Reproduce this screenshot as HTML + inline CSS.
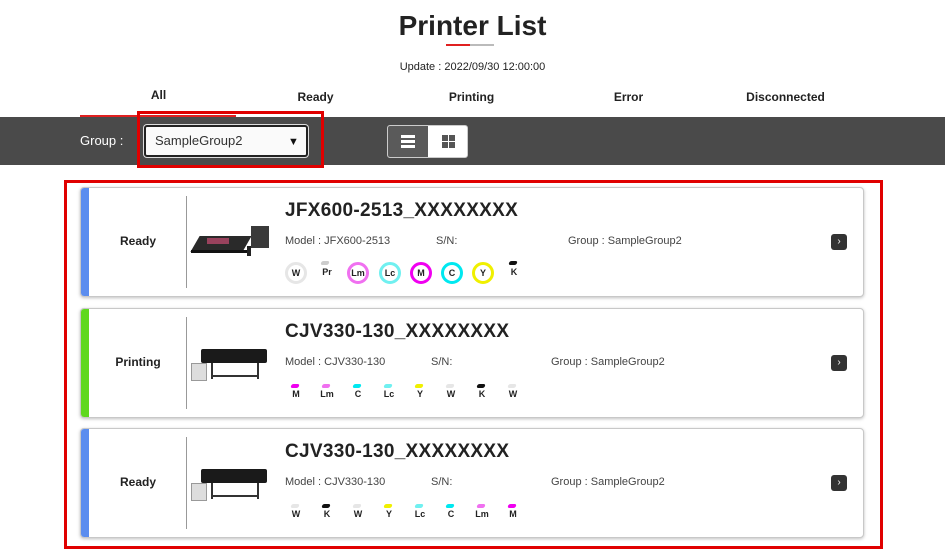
<!DOCTYPE html>
<html><head><meta charset="utf-8"><style>
*{margin:0;padding:0;box-sizing:border-box}
body{width:945px;height:550px;background:#fff;font-family:"Liberation Sans",sans-serif;color:#222;position:relative;overflow:hidden}
.a{position:absolute}
.tab{position:absolute;top:88px;width:157px;text-align:center;font-size:12px;font-weight:bold;color:#222}
.card{position:absolute;left:80px;width:784px;height:110px;border:1px solid #c8c8c8;border-radius:4px;background:#fff;box-shadow:0 1px 3px rgba(0,0,0,.25);overflow:hidden}
.bar{position:absolute;left:0;top:0;bottom:0;width:8px}
.st{position:absolute;left:8px;width:98px;top:0;line-height:106px;text-align:center;font-size:12px;font-weight:bold}
.dv{position:absolute;left:105px;top:8px;height:92px;width:1px;background:#999}
.nm{position:absolute;left:204px;top:12px;font-size:19px;font-weight:bold;letter-spacing:.3px}
.ln{position:absolute;top:47px;font-size:11px;color:#444}
.arr{position:absolute;left:750px;top:46px;width:16px;height:16px;border-radius:3px;background:#333;color:#fff;font-size:10px;line-height:16px;text-align:center}
.ink{position:absolute;font-size:9px;font-weight:bold;text-align:center;width:22px}
.ring{position:absolute;width:22px;height:22px;border-radius:50%;border:3px solid;font-size:9px;font-weight:bold;text-align:center;line-height:16px;color:#222}
.drop{position:absolute;width:8px;height:4px;border-radius:2px;transform:skewX(-20deg)}
</style></head><body>
<div class="a" style="left:0;top:10px;width:945px;text-align:center;font-size:28px;font-weight:bold;color:#222">Printer List</div>
<div class="a" style="left:446px;top:44px;width:24px;height:2px;background:#e02020"></div>
<div class="a" style="left:470px;top:44px;width:24px;height:2px;background:#bbb"></div>
<div class="a" style="left:0;top:61px;width:945px;text-align:center;font-size:11px">Update : 2022/09/30 12:00:00</div>
<div class="tab" style="left:80px">All</div>
<div class="tab" style="left:237px;top:90px">Ready</div>
<div class="tab" style="left:393px;top:90px">Printing</div>
<div class="tab" style="left:550px;top:90px">Error</div>
<div class="tab" style="left:707px;top:90px">Disconnected</div>
<div class="a" style="left:80px;top:115px;width:156px;height:2px;background:#e02020"></div>
<div class="a" style="left:0;top:117px;width:945px;height:48px;background:#4a4a4a"></div>
<div class="a" style="left:80px;top:133px;font-size:13px;color:#fff">Group :</div>
<div class="a" style="left:137px;top:111px;width:187px;height:57px;border:3px solid #e00000"></div>
<div class="a" style="left:144px;top:125px;width:164px;height:32px;background:#fafafa;border:2px solid #222;border-radius:3px;box-shadow:0 0 0 1px #ddd"></div>
<div class="a" style="left:155px;top:133px;font-size:13px;color:#333">SampleGroup2</div>
<div class="a" style="left:288px;top:136px;font-size:11px;color:#111">▼</div>
<div class="a" style="left:387px;top:125px;width:81px;height:33px;border-radius:3px;background:#fff;border:1px solid #ccc;overflow:hidden">
<div class="a" style="left:0;top:0;width:40px;height:33px;background:#5a5a5a"></div>
<div class="a" style="left:13px;top:9px;width:14px;height:3px;background:#fff"></div>
<div class="a" style="left:13px;top:14px;width:14px;height:3px;background:#fff"></div>
<div class="a" style="left:13px;top:19px;width:14px;height:3px;background:#fff"></div>
<div class="a" style="left:54px;top:9px;width:6px;height:6px;background:#555"></div>
<div class="a" style="left:61px;top:9px;width:6px;height:6px;background:#555"></div>
<div class="a" style="left:54px;top:16px;width:6px;height:6px;background:#555"></div>
<div class="a" style="left:61px;top:16px;width:6px;height:6px;background:#555"></div>
</div>
<div class="a" style="left:64px;top:180px;width:819px;height:369px;border:3px solid #e00000"></div>

<div class="card" style="top:187px">
<div class="bar" style="background:#5b8def"></div>
<div class="st">Ready</div><div class="dv"></div>
<div class="a" style="left:108px;top:36px;width:84px;height:36px">
<div class="a" style="left:6px;top:12px;width:52px;height:16px;background:#2a2a2a;transform:skewX(-30deg)"></div>
<div class="a" style="left:18px;top:14px;width:22px;height:6px;background:#b5486a;opacity:.8"></div>
<div class="a" style="left:2px;top:26px;width:56px;height:3px;background:#111"></div>
<div class="a" style="left:62px;top:2px;width:18px;height:22px;background:#3a3a3a"></div>
<div class="a" style="left:58px;top:22px;width:4px;height:10px;background:#222"></div></div>
<div class="nm">JFX600-2513_XXXXXXXX</div>
<div class="ln" style="left:204px">Model : JFX600-2513</div>
<div class="ln" style="left:355px">S/N:</div>
<div class="ln" style="left:487px">Group : SampleGroup2</div>
<div class="arr">›</div>
<div class="ring" style="left:204px;top:74px;border-color:#e6e6e6">W</div>
<div class="ink" style="left:235px;top:79px">Pr</div><div class="drop" style="left:240px;top:73px;background:#ccc"></div>
<div class="ring" style="left:266px;top:74px;border-color:#f070f0">Lm</div>
<div class="ring" style="left:298px;top:74px;border-color:#70f0f0">Lc</div>
<div class="ring" style="left:329px;top:74px;border-color:#f000f0">M</div>
<div class="ring" style="left:360px;top:74px;border-color:#00e8f0">C</div>
<div class="ring" style="left:391px;top:74px;border-color:#f0f000">Y</div>
<div class="ink" style="left:422px;top:79px">K</div><div class="drop" style="left:428px;top:73px;background:#111"></div>
</div>

<div class="card" style="top:308px">
<div class="bar" style="background:#5fd81e"></div>
<div class="st">Printing</div><div class="dv"></div>
<div class="a" style="left:110px;top:38px;width:80px;height:40px">
<div class="a" style="left:10px;top:2px;width:66px;height:14px;background:#1a1a1a;border-radius:2px"></div>
<div class="a" style="left:0;top:16px;width:16px;height:18px;background:#ddd;border:1px solid #999"></div>
<div class="a" style="left:20px;top:16px;width:2px;height:16px;background:#333"></div>
<div class="a" style="left:66px;top:16px;width:2px;height:16px;background:#333"></div>
<div class="a" style="left:20px;top:28px;width:48px;height:2px;background:#333"></div></div>
<div class="nm">CJV330-130_XXXXXXXX</div>
<div class="ln" style="left:204px">Model : CJV330-130</div>
<div class="ln" style="left:350px">S/N:</div>
<div class="ln" style="left:470px">Group : SampleGroup2</div>
<div class="arr">›</div>
</div>

<div class="card" style="top:428px">
<div class="bar" style="background:#5b8def"></div>
<div class="st">Ready</div><div class="dv"></div>
<div class="a" style="left:110px;top:38px;width:80px;height:40px">
<div class="a" style="left:10px;top:2px;width:66px;height:14px;background:#1a1a1a;border-radius:2px"></div>
<div class="a" style="left:0;top:16px;width:16px;height:18px;background:#ddd;border:1px solid #999"></div>
<div class="a" style="left:20px;top:16px;width:2px;height:16px;background:#333"></div>
<div class="a" style="left:66px;top:16px;width:2px;height:16px;background:#333"></div>
<div class="a" style="left:20px;top:28px;width:48px;height:2px;background:#333"></div></div>
<div class="nm">CJV330-130_XXXXXXXX</div>
<div class="ln" style="left:204px">Model : CJV330-130</div>
<div class="ln" style="left:350px">S/N:</div>
<div class="ln" style="left:470px">Group : SampleGroup2</div>
<div class="arr">›</div>
</div>

<script>
function row(top,list){list.forEach(function(it,i){var x=285+i*31;
var d=document.createElement('div');d.className='drop';d.style.left=(x+6)+'px';d.style.top=(top)+'px';d.style.background=it[1];document.body.appendChild(d);
var t=document.createElement('div');t.className='ink';t.style.left=(x)+'px';t.style.top=(top+5)+'px';t.textContent=it[0];document.body.appendChild(t);});}
row(384,[['M','#f000f0'],['Lm','#f070f0'],['C','#00e8f0'],['Lc','#70f0f0'],['Y','#f0f000'],['W','#e6e6e6'],['K','#111'],['W','#e6e6e6']]);
row(504,[['W','#e6e6e6'],['K','#111'],['W','#e6e6e6'],['Y','#f0f000'],['Lc','#70f0f0'],['C','#00e8f0'],['Lm','#f070f0'],['M','#f000f0']]);
</script>
</body></html>
